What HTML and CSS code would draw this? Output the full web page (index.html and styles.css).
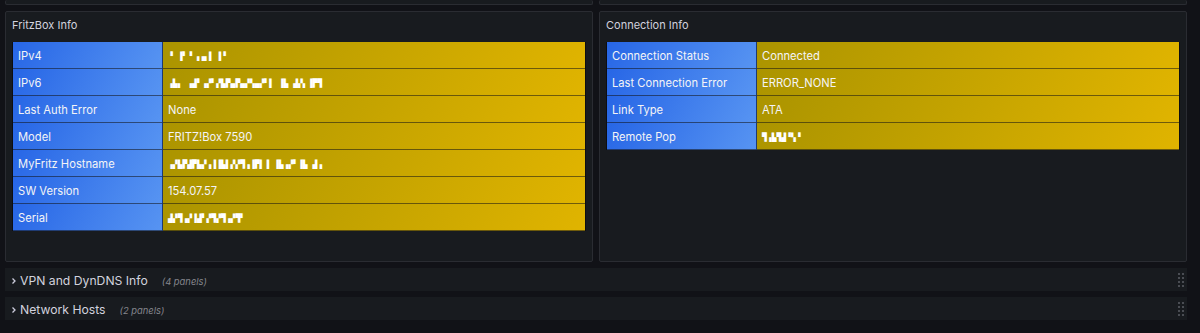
FILE: index.html
```html
<!DOCTYPE html>
<html lang="en">

<head>
    <meta charset="UTF-8">
    <meta name="viewport" content="width=device-width, initial-scale=1.0">
    <title>FritzBox Dashboard</title>
    <link rel="stylesheet" href="styles.css">
</head>

<body>
    <div class="dashboard">
        <div class="panel-row stub-row">
            <div class="panel stub"></div>
            <div class="panel stub"></div>
        </div>

        <div class="panel-row">
            <section class="panel">
                <div class="panel-header">FritzBox Info</div>
                <div class="info-table">
                    <div class="key-cell">IPv4</div>
                    <div class="value-cell"><span class="masked">▝ ▐▘▝ ▖▄▐ ▐▝</span></div>
                    <div class="key-cell">IPv6</div>
                    <div class="value-cell"><span class="masked">▗▙▖ ▗▟▘▗▞▘▞▙▛▄▛▄▞▚▄▞▘▌ ▐▙ ▟▞▖▐▛▜</span></div>
                    <div class="key-cell">Last Auth Error</div>
                    <div class="value-cell">None</div>
                    <div class="key-cell">Model</div>
                    <div class="value-cell">FRITZ!Box 7590</div>
                    <div class="key-cell">MyFritz Hostname</div>
                    <div class="value-cell"><span class="masked">▗▞▙▛▟▛▙▞▗▐▐▙▌▞▞▜▗▐▛▌▐ ▐▙▗▞▘▐▙ ▟▗</span></div>
                    <div class="key-cell">SW Version</div>
                    <div class="value-cell">154.07.57</div>
                    <div class="key-cell">Serial</div>
                    <div class="value-cell"><span class="masked">▟▞▜▗▞▐▟▘▞▜▞▜▗▞▜▘</span></div>
                </div>
            </section>

            <section class="panel">
                <div class="panel-header">Connection Info</div>
                <div class="info-table">
                    <div class="key-cell">Connection Status</div>
                    <div class="value-cell">Connected</div>
                    <div class="key-cell">Last Connection Error</div>
                    <div class="value-cell">ERROR_NONE</div>
                    <div class="key-cell">Link Type</div>
                    <div class="value-cell">ATA</div>
                    <div class="key-cell">Remote Pop</div>
                    <div class="value-cell"><span class="masked">▜▗▙▜▟▝▚▝</span></div>
                </div>
            </section>
        </div>

        <div class="row-bar">
            <svg class="chevron" width="6" height="8" viewBox="0 0 6 8">
                <path d="M1.5 1.5 L4 4 L1.5 6.5" fill="none" stroke="currentColor" stroke-width="1.3" />
            </svg>
            <span class="row-title">VPN and DynDNS Info</span>
            <span class="row-count">(4 panels)</span>
            <span class="drag-handle"><i></i><i></i><i></i><i></i><i></i><i></i><i></i><i></i></span>
        </div>

        <div class="row-bar">
            <svg class="chevron" width="6" height="8" viewBox="0 0 6 8">
                <path d="M1.5 1.5 L4 4 L1.5 6.5" fill="none" stroke="currentColor" stroke-width="1.3" />
            </svg>
            <span class="row-title">Network Hosts</span>
            <span class="row-count">(2 panels)</span>
            <span class="drag-handle"><i></i><i></i><i></i><i></i><i></i><i></i><i></i><i></i></span>
        </div>
    </div>
</body>

</html>
```

FILE: styles.css
```css
body {
    margin: 0;
    background-color: #111217;
    font-family: Inter, "Noto Sans", sans-serif;
    color: #ccccdc;
}

.dashboard {
    display: flex;
    flex-direction: column;
    gap: 6px;
    width: 1182px;
    padding-left: 5px;
}

.panel-row {
    display: grid;
    grid-template-columns: 1fr 1fr;
    gap: 6px;
}

.panel {
    background-color: #181b1f;
    border: 1px solid #2a2c32;
    border-radius: 2px;
    height: 251px;
    box-sizing: border-box;
    padding: 0 6px;
}

.stub {
    height: 5px;
    border-top: none;
}

.panel-header {
    height: 30px;
    padding-top: 6px;
    box-sizing: border-box;
    font-size: 11px;
    line-height: 14px;
    font-weight: 400;
    color: #d2d2de;
}

.info-table {
    display: grid;
    grid-template-columns: 150px 1fr;
    border: 1px solid rgba(0, 0, 0, 0.45);
    border-top: none;
    border-bottom: none;
    font-size: 11.2px;
    color: #f4f4f6;
}

.key-cell,
.value-cell {
    height: 27px;
    line-height: 27px;
    padding: 1px 0 0 5px;
    box-sizing: border-box;
    border-bottom: 1px solid rgba(20, 20, 20, 0.55);
    white-space: nowrap;
    overflow: hidden;
}

.key-cell {
    background: linear-gradient(120deg, #2766e6, #5794f2);
    border-right: 1px solid rgba(20, 20, 20, 0.55);
}

.value-cell {
    background: linear-gradient(120deg, #ab9400, #e0b400);
}

.masked {
    font-family: "DejaVu Sans Mono", monospace;
    font-size: 8px;
    color: #ffffff;
    letter-spacing: 0;
    vertical-align: 1px;
}

.row-bar {
    display: flex;
    align-items: center;
    height: 23px;
    background-color: #181b1f;
    padding-left: 6px;
}

.chevron {
    color: #ccccdc;
    margin-right: 3px;
    margin-top: 2px;
}

.row-title {
    font-size: 12.2px;
    font-weight: 400;
    color: #d2d2de;
    margin-top: 1px;
}

.row-count {
    font-size: 9.4px;
    font-style: italic;
    color: #85868d;
    margin-left: 14px;
    margin-top: 3px;
}

.drag-handle {
    margin-left: auto;
    margin-right: 3px;
    display: grid;
    grid-template-columns: 2px 2px;
    gap: 2px 2px;
}

.drag-handle i {
    display: block;
    width: 2px;
    height: 2px;
    background-color: #4a4d53;
}
```
